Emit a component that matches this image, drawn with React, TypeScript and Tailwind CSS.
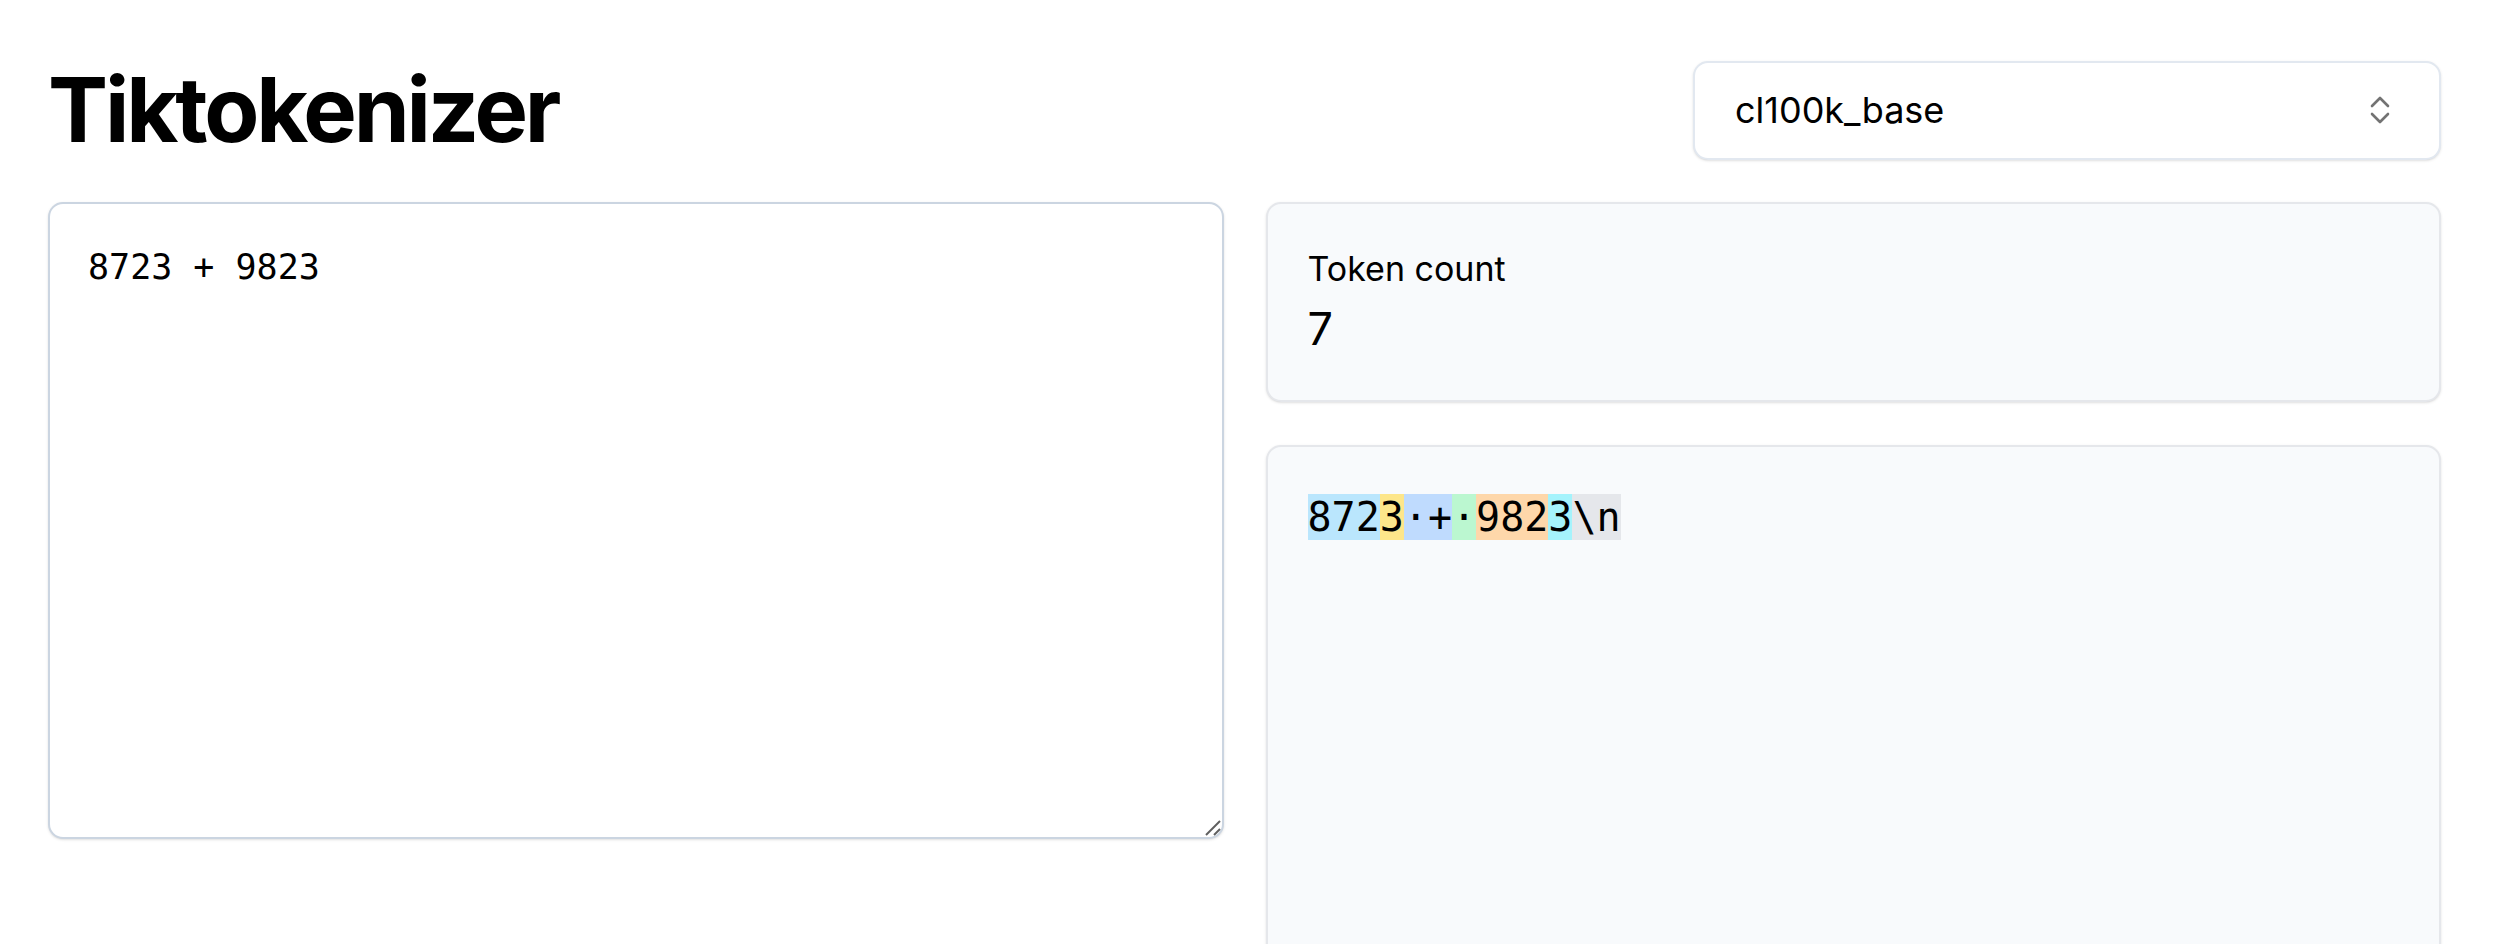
import { useState } from "react";

const TOKENS = [
  { text: "872", color: "bg-[#bae6fd]" },
  { text: "3", color: "bg-[#fde68a]" },
  { text: "·+", color: "bg-[#bfdbfe]" },
  { text: "·", color: "bg-[#bbf7d0]" },
  { text: "982", color: "bg-[#fed7aa]" },
  { text: "3", color: "bg-[#a5f3fc]" },
  { text: "\\n", color: "bg-[#e5e7eb]" },
];

function ChevronsUpDown() {
  return (
    <svg width="20" height="30" viewBox="0 0 20 30" fill="none" stroke="#737373" strokeWidth="2.6" strokeLinecap="round" strokeLinejoin="round">
      <path d="M2 11 L10 3 L18 11" />
      <path d="M2 19 L10 27 L18 19" />
    </svg>
  );
}

export default function App() {
  const [text, setText] = useState("8723 + 9823\n");

  return (
    <div className="min-h-screen bg-white text-black font-['Inter',sans-serif]">
      <div className="pl-[48px] pr-[53px] pt-[60px]">
        <div className="flex items-center justify-between h-[100px]">
          <h1 className="text-[90px] leading-[100px] font-bold tracking-[-0.035em]">Tiktokenizer</h1>
          <div className="w-[748px] h-[99px] flex items-center justify-between border-2 border-[#e2e8f0] rounded-[15px] bg-white shadow-sm pl-[40px] pr-[49px]">
            <span className="text-[36px]">cl100k_base</span>
            <ChevronsUpDown />
          </div>
        </div>

        <div className="mt-[42px] grid grid-cols-2 gap-[42px]">
          <div className="relative self-start">
            <textarea
              value={text}
              onChange={(e) => setText(e.target.value)}
              className="block h-[637px] w-full resize-none border-2 border-[#cbd5e1] rounded-[15px] bg-white shadow-sm p-[38px] font-['DejaVu_Sans_Mono',monospace] text-[35px] leading-[50px] outline-none"
            />
            {/* resize grip */}
            <svg className="absolute right-[3px] bottom-[3px] pointer-events-none" width="16" height="16" viewBox="0 0 16 16" fill="none" stroke="#5f5f5f" strokeWidth="2">
              <path d="M1 15 L15 1" />
              <path d="M9 15 L15 9" />
            </svg>
          </div>

          <div className="flex flex-col gap-[43px]">
            <div className="h-[200px] border-2 border-[#e5e7eb] rounded-[15px] bg-[#f8fafc] shadow-sm px-[40px] pt-[40px]">
              <div className="text-[34px] leading-[50px]">Token count</div>
              <div className="text-[45px] leading-[70px]">7</div>
            </div>

            <div className="min-h-[700px] border-2 border-[#e5e7eb] rounded-[15px] bg-[#f8fafc] shadow-sm p-[40px]">
              <pre className="font-['DejaVu_Sans_Mono',monospace] text-[40px] leading-[60px]">
                {TOKENS.map((t, i) => (
                  <span key={i} className={t.color}>
                    {t.text}
                  </span>
                ))}
              </pre>
            </div>
          </div>
        </div>
      </div>
    </div>
  );
}
